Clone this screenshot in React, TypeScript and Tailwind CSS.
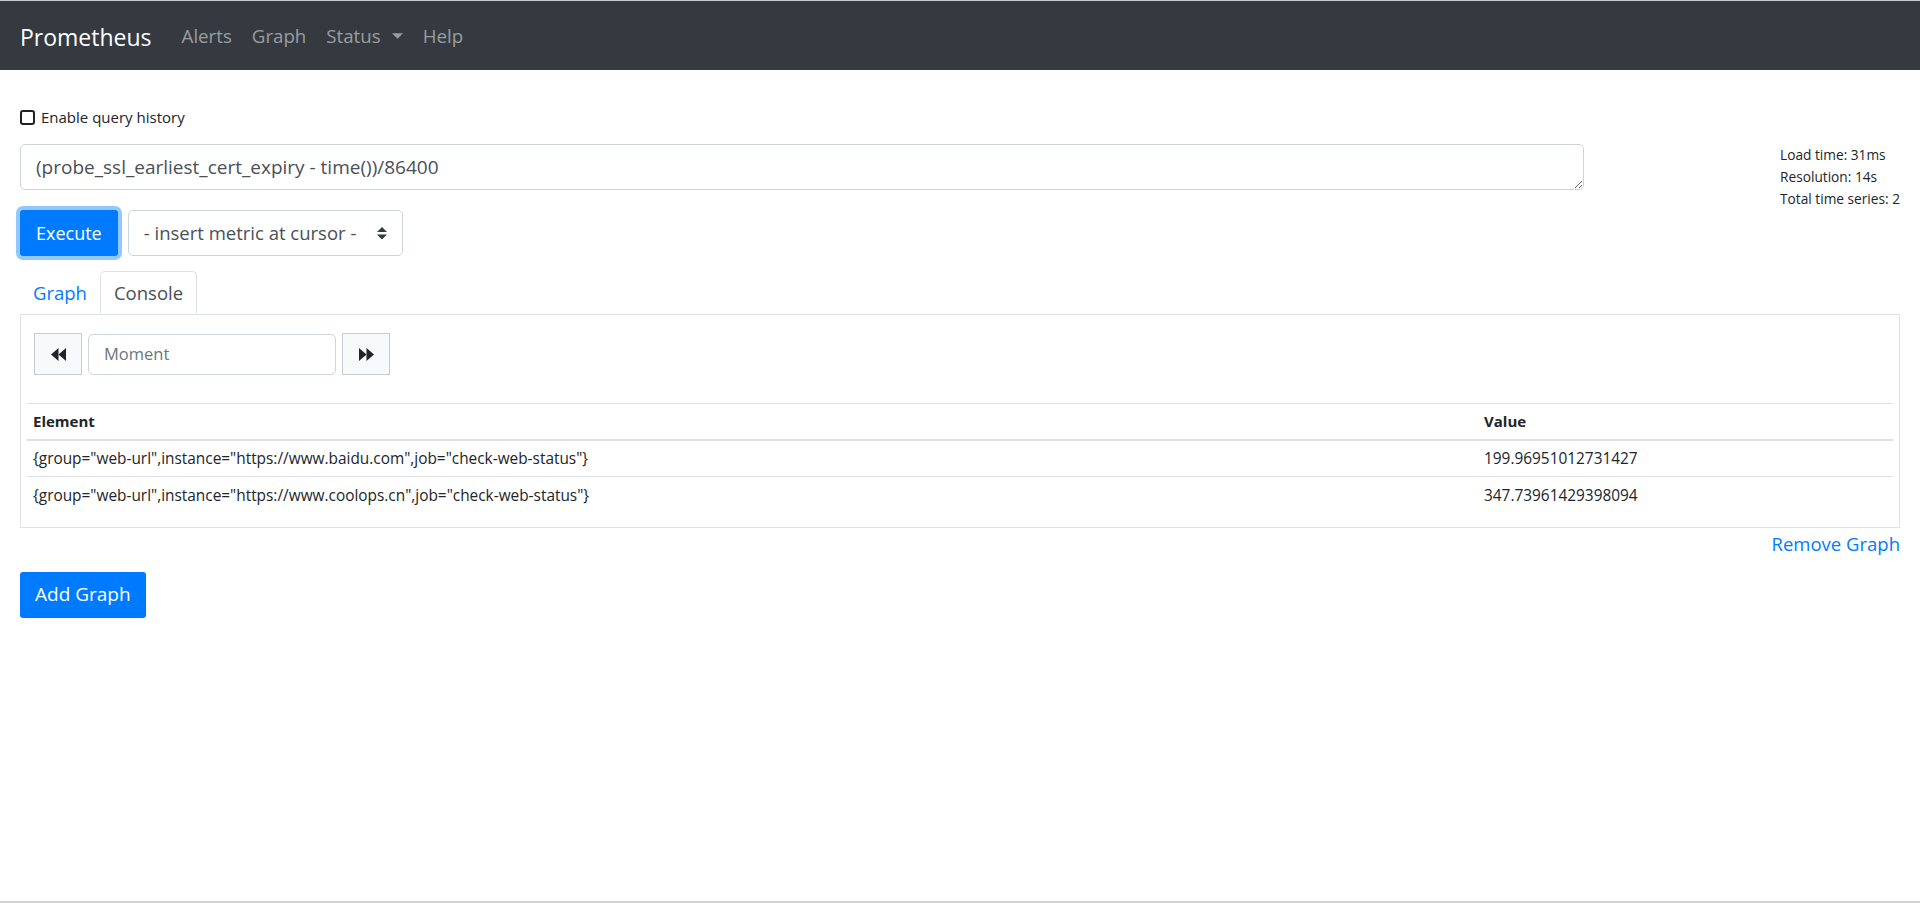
import React from "react";

// Console results shown in the table
const series = [
  {
    metric: '{group="web-url",instance="https://www.baidu.com",job="check-web-status"}',
    value: "199.96951012731427",
  },
  {
    metric: '{group="web-url",instance="https://www.coolops.cn",job="check-web-status"}',
    value: "347.73961429398094",
  },
];

function Backward() {
  return (
    <svg viewBox="0 0 14 12" className="w-[15px] h-[13px] fill-[#212529]">
      <polygon points="7,0 0,6 7,12" />
      <polygon points="14,0 7,6 14,12" />
    </svg>
  );
}

function Forward() {
  return (
    <svg viewBox="0 0 14 12" className="w-[15px] h-[13px] fill-[#212529]">
      <polygon points="0,0 7,6 0,12" />
      <polygon points="7,0 14,6 7,12" />
    </svg>
  );
}

export default function App() {
  return (
    <div className="h-[903px] overflow-hidden bg-white border-b-2 border-[#d2d2d2] font-['Open_Sans',sans-serif] text-[#212529]">
      {/* Navbar */}
      <nav className="h-[70px] bg-[#343a40] border-t border-[#c8cacd] flex items-center px-[20px]">
        <span className="text-[23px] text-white mr-[20px] leading-[30px] mt-[2px]">Prometheus</span>
        <div className="flex items-center text-[18.7px] text-white/50 mt-[2px]">
          <span className="px-[10px]">Alerts</span>
          <span className="px-[10px]">Graph</span>
          <span className="px-[10px] flex items-center gap-[11px]">
            Status
            <svg viewBox="0 0 12 6" className="w-[11px] h-[6px] fill-current">
              <polygon points="0,0 12,0 6,6" />
            </svg>
          </span>
          <span className="px-[10px]">Help</span>
        </div>
      </nav>

      <main className="px-[20px]">
        {/* Query history toggle */}
        <div className="pt-[36px]">
          <label className="h-[22px] flex items-center gap-[6px] text-[15px]">
            <span className="w-[15px] h-[15px] border-[2.5px] border-[#222] rounded-[3px] bg-white" />
            Enable query history
          </label>
        </div>

        {/* Expression + stats */}
        <div className="mt-[16px] flex">
          <div className="w-[1564px]">
            <textarea
              readOnly
              value="(probe_ssl_earliest_cert_expiry - time())/86400"
              className="block w-full h-[46px] resize-y border border-[#ced4da] rounded-[5px] px-[15px] py-[8px] text-[19px] leading-[28px] text-[#495057] outline-none bg-white"
            />
            <div className="mt-[20px] flex items-center">
              <button className="h-[46px] px-[16px] bg-[#007bff] text-white text-[18px] rounded-[3px] shadow-[0_0_0_4px_rgba(38,143,255,0.5)]">
                Execute
              </button>
              <div className="ml-[10px] w-[275px] h-[46px] border border-[#ced4da] rounded-[5px] flex items-center justify-between pl-[15px] pr-[15px] text-[18.5px] text-[#495057]">
                <span>- insert metric at cursor -</span>
                <svg viewBox="0 0 4 5" className="w-[10px] h-[12.5px] fill-[#343a40]">
                  <path d="M2 0L0 2h4zm0 5L0 3h4z" />
                </svg>
              </div>
            </div>
          </div>
          <div className="ml-auto text-[13.7px] leading-[22px] text-[#212529]">
            <div>Load time: 31ms</div>
            <div>Resolution: 14s</div>
            <div>Total time series: 2</div>
          </div>
        </div>

        {/* Tabs */}
        <div className="mt-[15px] flex border-b border-[#dee2e6] text-[18.5px]">
          <span className="h-[43px] px-[12px] flex items-center text-[#007bff] border border-transparent">
            Graph
          </span>
          <span className="h-[43px] px-[13px] flex items-center text-[#495057] bg-white border border-[#dee2e6] border-b-white rounded-t-[5px] -mb-px">
            Console
          </span>
        </div>

        {/* Console panel */}
        <div className="border-x border-b border-[#dee2e6] px-[6px] pt-[18px] pb-[13px]">
          <div className="pl-[7px] flex items-center">
            <button className="w-[48px] h-[42px] bg-[#f8f9fa] border border-[#c8ccd0] flex items-center justify-center">
              <Backward />
            </button>
            <div className="ml-[6px] w-[248px] h-[41px] border border-[#ced4da] rounded-[5px] flex items-center pl-[15px] text-[16.5px] text-[#6c757d]">
              Moment
            </div>
            <button className="ml-[6px] w-[48px] h-[42px] bg-[#f8f9fa] border border-[#c8ccd0] flex items-center justify-center">
              <Forward />
            </button>
          </div>

          <table className="mt-[28px] w-full text-[15.4px]">
            <thead>
              <tr className="border-t border-[#dee2e6] border-b-2">
                <th className="w-[1451px] h-[36px] px-[6px] text-left font-bold align-middle text-[15px]">Element</th>
                <th className="h-[36px] px-[6px] text-left font-bold align-middle text-[15px]">Value</th>
              </tr>
            </thead>
            <tbody>
              {series.map((s) => (
                <tr key={s.metric} className="border-t border-[#dee2e6]">
                  <td className="h-[37px] px-[6px] pt-[1px] align-middle">{s.metric}</td>
                  <td className="h-[37px] px-[6px] pt-[1px] align-middle">{s.value}</td>
                </tr>
              ))}
            </tbody>
          </table>
        </div>

        <div className="mt-[2px] flex justify-end">
          <span className="leading-[28px] text-[18.5px] text-[#007bff]">Remove Graph</span>
        </div>

        <button className="mt-[14px] h-[46px] px-[15px] bg-[#007bff] text-white text-[19px] rounded-[3px]">
          Add Graph
        </button>
      </main>
    </div>
  );
}
